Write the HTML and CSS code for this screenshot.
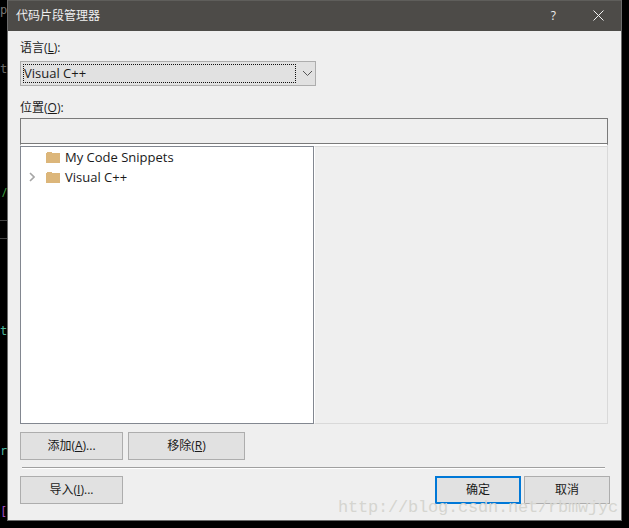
FILE: index.html
```html
<!DOCTYPE html>
<html lang="zh">
<head>
<meta charset="utf-8">
<title>代码片段管理器</title>
<link rel="stylesheet" href="styles.css">
</head>
<body>
<div class="bg-text bg-p">p</div>
<div class="bg-text bg-g">t</div>
<div class="bg-text bg-t">t</div>
<div class="bg-text bg-r">r</div>
<div class="bg-text bg-e">[</div>
<div class="bg-slash">/</div>
<div class="bg-line bg-line1"></div>
<div class="bg-line bg-line2"></div>
<div class="dialog">
  <header class="titlebar">
    <span class="title">代码片段管理器</span>
    <span class="help">?</span>
    <svg class="close" width="11" height="11" viewBox="0 0 11 11"><path d="M.5.5l10 10M10.500.5l-10 10" stroke="#f2f2f2" stroke-width="1" fill="none"/></svg>
  </header>
  <main class="content">
    <label class="label label-lang">语言(<u>L</u>):</label>
    <div class="combo">
      <div class="combo-value"><span class="latin">Visual C++</span></div>
      <svg class="combo-arrow" width="11" height="7" viewBox="0 0 11 7"><path d="M1 1l4.500 4.500L10 1" stroke="#555" stroke-width="1" fill="none"/></svg>
    </div>
    <label class="label label-loc">位置(<u>O</u>):</label>
    <div class="location"></div>
    <div class="panes">
      <div class="tree">
        <div class="tree-row">
          <span class="twisty"></span>
          <svg class="folder" width="14" height="12" viewBox="0 0 14 12"><path d="M0 2h1V1h5v1h8v10H0z" fill="#dcb67a"/></svg>
          <span class="latin">My Code Snippets</span>
        </div>
        <div class="tree-row">
          <svg class="twisty" width="6" height="10" viewBox="0 0 6 10"><path d="M1 1l4 4-4 4" stroke="#a6a6a6" stroke-width="1.600" fill="none"/></svg>
          <svg class="folder" width="14" height="12" viewBox="0 0 14 12"><path d="M0 2h1V1h5v1h8v10H0z" fill="#dcb67a"/></svg>
          <span class="latin">Visual C++</span>
        </div>
      </div>
      <div class="detail"></div>
    </div>
    <div class="row row-edit">
      <button class="btn btn-wide">添加(<u>A</u>)...</button>
      <button class="btn btn-remove">移除(<u>R</u>)</button>
    </div>
    <div class="separator"></div>
    <div class="row row-foot">
      <button class="btn btn-wide">导入(<u>I</u>)...</button>
      <button class="btn btn-ok">确定</button>
      <button class="btn btn-cancel">取消</button>
    </div>
  </main>
</div>
<div class="watermark">http://blog.csdn.net/rbmwjyc</div>
</body>
</html>
```
FILE: styles.css
```css
* { box-sizing: border-box; }
html, body { margin: 0; padding: 0; }
body {
  width: 629px;
  height: 528px;
  background: #000;
  position: relative;
  overflow: hidden;
  font-family: "Open Sans", "Noto Sans CJK SC", sans-serif;
  font-size: 12px;
  color: #1a1a1a;
}
.latin { font-size: 13px; }
.dialog {
  position: absolute;
  left: 7px;
  top: 0;
  width: 615px;
  height: 521px;
  background: #efefef;
  border: 1px solid #6b6b6b;
  border-top: 0;
  display: flex;
  flex-direction: column;
}
.titlebar {
  height: 31px;
  flex: none;
  background: #4d4b48;
  border-top: 1px solid #5f5e5b;
  color: #f0f0f0;
  display: flex;
  align-items: center;
  padding: 0 17px 2px 8px;
}
.title { flex: 1; font-size: 12px; }
.help { font-size: 12px; margin-right: 37px; }
.content {
  flex: 1;
  padding: 0 0 0 12px;
  display: flex;
  flex-direction: column;
}
.label { display: block; height: 16px; line-height: 16px; }
.label-lang { margin-top: 9px; }
.label-loc { margin-top: 14px; }
.combo {
  width: 296px;
  height: 25px;
  margin-top: 5px;
  background: #e1e1e1;
  border: 1px solid #adadad;
  display: flex;
  align-items: center;
  padding: 2px;
}
.combo-value {
  width: 273px;
  height: 19px;
  border: 1px dotted #111;
  line-height: 16px;
}
.combo-arrow { margin-left: 6px; }
.location {
  width: 588px;
  height: 28px;
  margin-top: 2px;
  border: 1px solid #7a7a7a;
  border-bottom: 2px solid #fff;
  box-shadow: inset 0 -1px 0 #7a7a7a;
  background: #efefef;
}
.panes { display: flex; width: 588px; height: 278px; }
.tree {
  width: 294px;
  background: #fff;
  border: 1px solid #828790;
}
.tree-row {
  height: 20px;
  display: flex;
  align-items: center;
  padding-left: 8px;
}
.twisty { width: 6px; margin-right: 11px; flex: none; }
.folder { margin-right: 5px; flex: none; }
.detail {
  flex: 1;
  background: #efefef;
  border: 1px solid #d9d9d9;
  border-left-color: #fff;
}
.row { display: flex; }
.row-edit { margin-top: 8px; gap: 5px; }
.row-foot { margin-top: 7px; width: 590px; }
.btn {
  height: 28px;
  background: #e1e1e1;
  border: 1px solid #adadad;
  font: inherit;
  color: inherit;
  padding: 0 0 1px;
  line-height: 16px;
}
.btn-wide { width: 103px; }
.btn-remove { width: 117px; }
.btn-ok { width: 86px; margin-left: auto; border: 2px solid #0078d7; }
.btn-cancel { width: 86px; margin-left: 3px; }
.separator {
  width: 583px;
  height: 2px;
  margin: 7px 0 0 2px;
  background: #a0a0a0;
  border-bottom: 1px solid #fff;
}
.watermark {
  position: absolute;
  left: 338px;
  top: 499px;
  font-family: "Liberation Mono", monospace;
  font-size: 17px;
  line-height: 18px;
  color: #d5d5d0;
  white-space: nowrap;
  letter-spacing: -0.2px;
}
.bg-text { position: absolute; left: 0; font-family: "DejaVu Sans Mono", monospace; font-size: 12px; line-height: 14px; }
.bg-p { top: 3px; color: #777; }
.bg-g { top: 62px; color: #666; }
.bg-t { top: 324px; color: #4fb59a; }
.bg-r { top: 444px; color: #4fb5a0; }
.bg-e { top: 505px; color: #a04ec0; }
.bg-slash { position: absolute; left: 2px; top: 183px; color: #3f9f3f; font-size: 13px; }
.bg-line { position: absolute; left: 0; width: 7px; height: 1px; background: #444; }
.bg-line1 { top: 220px; }
.bg-line2 { top: 238px; }
```
